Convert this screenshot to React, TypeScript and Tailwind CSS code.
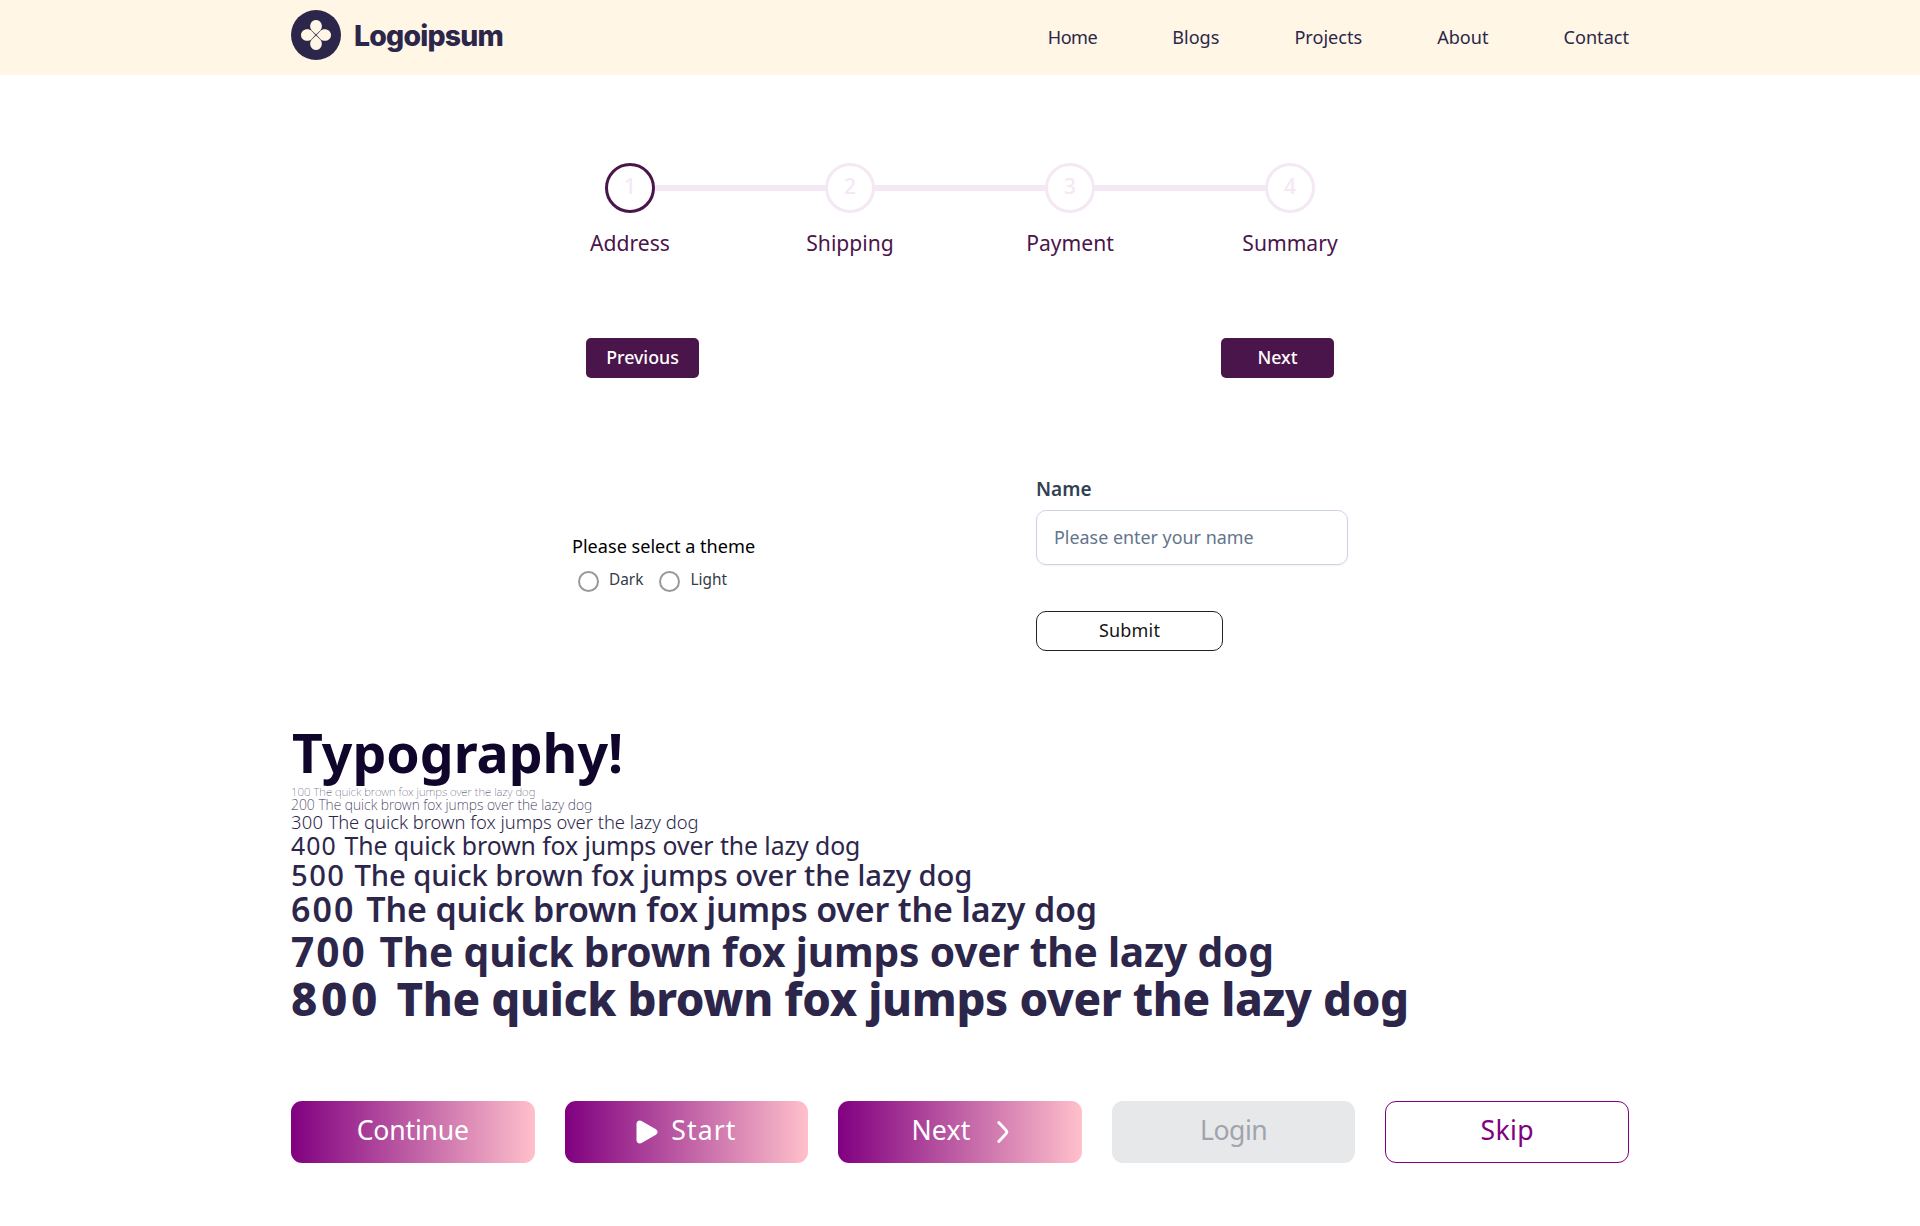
const navLinks = ['Home', 'Blogs', 'Projects', 'About', 'Contact']
const steps = ['Address', 'Shipping', 'Payment', 'Summary']

const samples = [
  { weight: 100, digits: 'tracking-normal', style: 'h-[13px] leading-[13px] text-[11.45px] font-thin' },
  { weight: 200, digits: 'tracking-normal', style: 'h-[13px] leading-[13px] text-[13.9px] font-extralight' },
  { weight: 300, digits: 'tracking-[0.015em]', style: 'h-[22px] leading-[22px] text-[18.4px] font-light tracking-[-0.001em]' },
  { weight: 400, digits: 'tracking-[0.045em]', style: 'h-[25px] leading-[25px] text-[24.8px] font-normal tracking-[-0.003em]' },
  { weight: 500, digits: 'tracking-[0.05em]', style: 'h-[35px] leading-[35px] text-[29.2px] font-medium tracking-[-0.003em]' },
  { weight: 600, digits: 'tracking-[0.06em]', style: 'h-[32px] leading-[32px] text-[34px] font-semibold tracking-[-0.005em]' },
  { weight: 700, digits: 'tracking-[0.05em]', style: 'h-[52px] leading-[52px] text-[40.7px] font-bold tracking-[-0.0045em]' },
  { weight: 800, digits: 'tracking-[0.08em]', style: 'h-[43px] leading-[43px] text-[45.6px] font-extrabold tracking-[-0.0075em]' },
]

function Logo() {
  return (
    <a href="#" className="flex items-center gap-[13px] text-[#2d264b]">
      <svg width="50" height="50" viewBox="0 0 50 50" aria-hidden="true">
        <circle cx="25" cy="25" r="25" fill="currentColor" />
        <g fill="#fff6e5">
          {[0, 90, 180, 270].map((angle) => (
            <path
              key={angle}
              transform={`rotate(${angle} 25 25)`}
              d="M25 24.4 L20.6 20.2 C17.4 16.4 19.8 10 25 10 S32.6 16.4 29.4 20.2 Z"
            />
          ))}
        </g>
      </svg>
      <span className="pt-0.5 font-[Inter,sans-serif] text-[28.4px] leading-none font-extrabold tracking-[-0.8px]">
        Logoipsum
      </span>
    </a>
  )
}

function Header() {
  return (
    <header className="h-[75px] bg-[#fff6e5]">
      <div className="mx-auto flex w-[1338px] items-start justify-between">
        <div className="pt-[10px]">
          <Logo />
        </div>
        <nav className="flex h-[76px] items-center gap-[75px] text-[18.1px] text-[#2d264b]">
          {navLinks.map((link) => (
            <a key={link} href="#" className="first:tracking-[-0.5px]">
              {link}
            </a>
          ))}
        </nav>
      </div>
    </header>
  )
}

function Stepper() {
  return (
    <section className="mx-auto mt-[88px] w-[880px]">
      <div className="flex items-center px-[85px]">
        {steps.map((step, i) => (
          <div key={step} className={i ? 'flex flex-1 items-center' : 'flex items-center'}>
            {i > 0 && <div className="h-[6px] flex-1 bg-[#f3e8f3]" />}
            <div
              className={
                i === 0
                  ? 'flex size-[50px] items-center justify-center rounded-full border-3 border-[#4a154b]'
                  : 'flex size-[50px] items-center justify-center rounded-full border-3 border-[#f3e8f3]'
              }
            >
              <span className="-mt-1 text-[21px] leading-none font-medium text-[#f3e8f3]">{i + 1}</span>
            </div>
          </div>
        ))}
      </div>
      <div className="mt-[14px] grid grid-cols-4 text-center text-[21.1px] leading-[31px] text-[#4a154b]">
        {steps.map((step) => (
          <span key={step}>{step}</span>
        ))}
      </div>
      <div className="mx-[66px] mt-[80px] flex justify-between text-[17.8px] font-medium text-white">
        {['Previous', 'Next'].map((label) => (
          <button key={label} className="h-10 w-[113px] rounded-[5px] bg-[#4a154b] pb-0.5">
            {label}
          </button>
        ))}
      </div>
    </section>
  )
}

function ThemePicker() {
  return (
    <fieldset className="w-[464px] pt-[60px]">
      <p className="text-[18.1px] leading-[23px] text-black">Please select a theme</p>
      <div className="mt-[11px] ml-[6px] flex items-start gap-[16px] text-[15.4px] leading-[22px] text-[#333a48]">
        {['Dark', 'Light'].map((theme) => (
          <label key={theme} className="flex items-start gap-[10px]">
            <span className="mt-0.5 size-[21px] rounded-full border-2 border-[#999]" />
            {theme}
          </label>
        ))}
      </div>
    </fieldset>
  )
}

function NameForm() {
  return (
    <form className="flex w-[312px] flex-col">
      <label className="text-[19px] leading-[28px] font-semibold text-[#334155]">Name</label>
      <input
        placeholder="Please enter your name"
        className="mt-[7px] h-[55px] rounded-[10px] border border-[#cbd5e1] px-[17px] pb-0.5 text-[17.9px] shadow-xs placeholder:text-[#64748b]"
      />
      <button
        type="button"
        className="mt-[46px] h-10 w-[187px] rounded-[10px] border border-[#222] pb-0.5 text-[18px] font-normal tracking-[0.2px] text-[#151515]"
      >
        Submit
      </button>
    </form>
  )
}

function Typography() {
  return (
    <section className="mx-auto mt-[70px] w-[1338px] whitespace-nowrap text-[#2d264b]">
      <h1 className="h-[64px] pl-px text-[53.6px] leading-[64px] font-bold text-[#10052b]">Typography!</h1>
      {samples.map(({ weight, digits, style }) => (
        <p key={weight} className={style}>
          <span className={digits}>{weight} </span>The quick brown fox jumps over the lazy dog
        </p>
      ))}
    </section>
  )
}

function Actions() {
  return (
    <section className="mx-auto mt-[81px] grid w-[1338px] grid-cols-5 gap-[30px] text-[26.6px] *:flex *:h-[62px] *:items-center *:justify-center *:rounded-[11px] *:pb-0.5">
      <button className="bg-linear-to-r/srgb from-[#800080] to-[#ffc0cb] tracking-[-0.2px] text-white">Continue</button>
      <button className="gap-[13px] bg-linear-to-r/srgb from-[#800080] to-[#ffc0cb] text-white">
        <svg width="22" height="24" viewBox="0 0 22 24" fill="currentColor" className="mt-0.5" aria-hidden="true">
          <path d="M.5 4 C.5 1 3.2-.4 6 1.2 L19.5 9 C22.3 10.7 22.3 13.3 19.5 15 L6 22.8 C3.2 24.4 .5 23 .5 20 Z" />
        </svg>
        <span className="tracking-[1.1px]">Start</span>
      </button>
      <button className="gap-[26px] bg-linear-to-r/srgb from-[#800080] to-[#ffc0cb] text-white">
        <span className="tracking-[0.2px]">Next</span>
        <svg
          width="12"
          height="22"
          viewBox="0 0 12 22"
          fill="none"
          stroke="currentColor"
          strokeWidth="2.9"
          strokeLinecap="round"
          className="mt-0.5"
          aria-hidden="true"
        >
          <path d="M1.8 1.6 L8.8 9 Q10.8 11 8.8 13 L1.8 20.4" />
        </svg>
      </button>
      <button className="bg-[#e7e8ea] tracking-[-0.5px] text-[#a1a3ad]">Login</button>
      <button className="border border-[#800080] tracking-[0.3px] text-[#800080]">Skip</button>
    </section>
  )
}

export default function App() {
  return (
    <div className="min-h-[1226px] bg-white font-['Noto_Sans',sans-serif]">
      <Header />
      <Stepper />
      <section className="mx-auto mt-[97px] flex h-[176px] w-[776px] items-start">
        <ThemePicker />
        <NameForm />
      </section>
      <Typography />
      <Actions />
    </div>
  )
}
